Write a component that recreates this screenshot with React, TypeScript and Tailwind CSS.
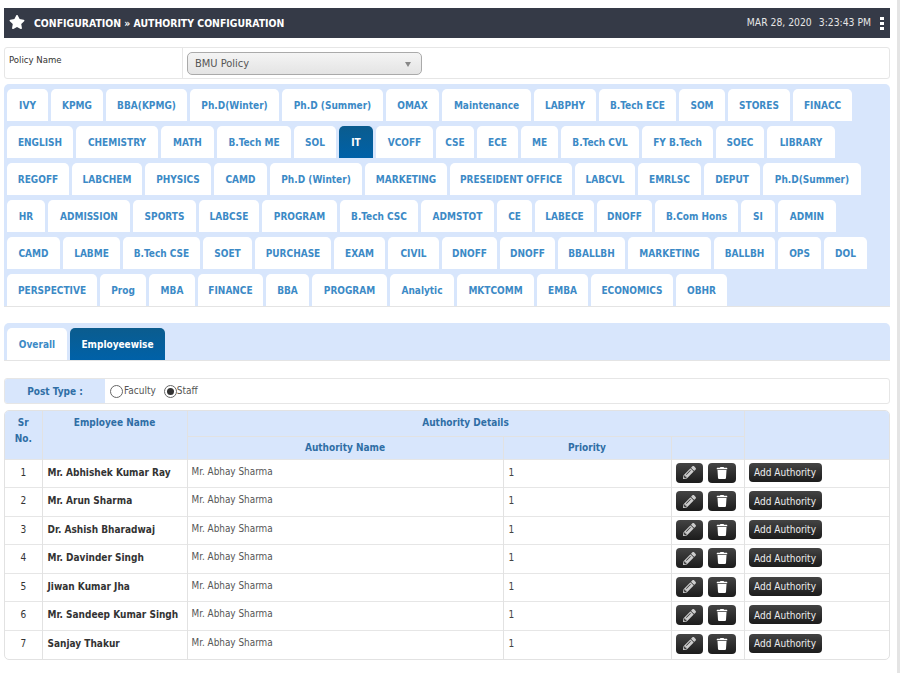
import { FaStar, FaPencilAlt, FaTrash } from "react-icons/fa";

const tabRows: [string, string][][] = [
  [["IVY", "w-[41px]"], ["KPMG", "w-[52px]"], ["BBA(KPMG)", "w-[81px]"], ["Ph.D(Winter)", "w-[89px]"], ["Ph.D (Summer)", "w-[101px]"], ["OMAX", "w-[53px]"], ["Maintenance", "w-[89px]"], ["LABPHY", "w-[62px]"], ["B.Tech ECE", "w-[77px]"], ["SOM", "w-[46px]"], ["STORES", "w-[62px]"], ["FINACC", "w-[59px]"]],
  [["ENGLISH", "w-[66px]"], ["CHEMISTRY", "w-[82px]"], ["MATH", "w-[53px]"], ["B.Tech ME", "w-[74px]"], ["SOL", "w-[42px]"], ["IT", "w-[34px]"], ["VCOFF", "w-[57px]"], ["CSE", "w-[38px]"], ["ECE", "w-[41px]"], ["ME", "w-[37px]"], ["B.Tech CVL", "w-[78px]"], ["FY B.Tech", "w-[71px]"], ["SOEC", "w-[48px]"], ["LIBRARY", "w-[68px]"]],
  [["REGOFF", "w-[62px]"], ["LABCHEM", "w-[70px]"], ["PHYSICS", "w-[66px]"], ["CAMD", "w-[53px]"], ["Ph.D (Winter)", "w-[92px]"], ["MARKETING", "w-[82px]"], ["PRESEIDENT OFFICE", "w-[122px]"], ["LABCVL", "w-[60px]"], ["EMRLSC", "w-[63px]"], ["DEPUT", "w-[56px]"], ["Ph.D(Summer)", "w-[98px]"]],
  [["HR", "w-[38px]"], ["ADMISSION", "w-[82px]"], ["SPORTS", "w-[63px]"], ["LABCSE", "w-[60px]"], ["PROGRAM", "w-[75px]"], ["B.Tech CSC", "w-[78px]"], ["ADMSTOT", "w-[73px]"], ["CE", "w-[35px]"], ["LABECE", "w-[59px]"], ["DNOFF", "w-[55px]"], ["B.Com Hons", "w-[83px]"], ["SI", "w-[34px]"], ["ADMIN", "w-[58px]"]],
  [["CAMD", "w-[53px]"], ["LABME", "w-[57px]"], ["B.Tech CSE", "w-[77px]"], ["SOET", "w-[49px]"], ["PURCHASE", "w-[76px]"], ["EXAM", "w-[51px]"], ["CIVIL", "w-[51px]"], ["DNOFF", "w-[55px]"], ["DNOFF", "w-[55px]"], ["BBALLBH", "w-[67px]"], ["MARKETING", "w-[83px]"], ["BALLBH", "w-[61px]"], ["OPS", "w-[43px]"], ["DOL", "w-[43px]"]],
  [["PERSPECTIVE", "w-[90px]"], ["Prog", "w-[46px]"], ["MBA", "w-[46px]"], ["FINANCE", "w-[65px]"], ["BBA", "w-[43px]"], ["PROGRAM", "w-[75px]"], ["Analytic", "w-[64px]"], ["MKTCOMM", "w-[77px]"], ["EMBA", "w-[51px]"], ["ECONOMICS", "w-[82px]"], ["OBHR", "w-[51px]"]],
];

const employees = [
  "Mr. Abhishek Kumar Ray",
  "Mr. Arun Sharma",
  "Dr. Ashish Bharadwaj",
  "Mr. Davinder Singh",
  "Jiwan Kumar Jha",
  "Mr. Sandeep Kumar Singh",
  "Sanjay Thakur",
];

function Tab({ label, width, active }: { label: string; width: string; active?: boolean }) {
  return (
    <div
      className={`${width} h-[32px] flex items-center justify-center pt-[1px] rounded-t-[5px] text-[10px] font-bold whitespace-nowrap ${
        active ? "bg-gradient-to-b from-[#0b5c8e] to-[#0061a8] text-white" : "bg-white text-[#3c8ac6]"
      }`}
    >
      {label}
    </div>
  );
}

function IconButton({ width, children }: { width: string; children: React.ReactNode }) {
  return (
    <span className={`${width} h-[20px] flex items-center justify-center rounded-[4px] bg-gradient-to-b from-[#444] to-[#1c1c1c] text-white`}>
      {children}
    </span>
  );
}

export default function App() {
  return (
    <div className="relative w-[900px] h-[673px] bg-white overflow-hidden pt-[8px] pl-[4px] pr-[10px] font-['DejaVu_Sans','Noto_Sans',sans-serif] font-stretch-condensed text-[#333]">
      <div className="absolute top-0 right-0 bottom-0 w-[3px] bg-[#e4e4e4]" />

      {/* header */}
      <div className="h-[30px] bg-[#353a47] flex items-center justify-between text-white">
        <div className="flex items-center">
          <FaStar className="ml-[5px] text-[16px] -mt-[2px]" />
          <span className="ml-[9px] pt-[1px] text-[10.4px] font-bold">CONFIGURATION » AUTHORITY CONFIGURATION</span>
        </div>
        <div className="flex items-center text-[10.3px] text-[#e6e6e6]">
          <span>MAR 28, 2020</span>
          <span className="ml-[7px]">3:23:43 PM</span>
          <span className="ml-[9px] mr-[6px] flex flex-col gap-[2px]">
            <i className="block w-[4px] h-[3px] bg-white" />
            <i className="block w-[4px] h-[3px] bg-white" />
            <i className="block w-[4px] h-[3px] bg-white" />
          </span>
        </div>
      </div>

      {/* policy */}
      <div className="mt-[9px] h-[32px] flex border border-[#e6e6e6] rounded-[3px]">
        <div className="w-[178px] border-r border-[#e6e6e6] pl-[4px] pt-[5px] text-[9.5px]">Policy Name</div>
        <div className="pl-[4px] pt-[4px]">
          <div className="w-[235px] h-[23px] flex items-center justify-between pl-[7px] pr-[10px] pt-[1px] rounded-[5px] border border-[#aaa] bg-gradient-to-b from-[#f4f4f4] to-[#e4e4e4] text-[11px] text-[#555]">
            BMU Policy
            <span className="w-0 h-0 border-x-[3px] border-x-transparent border-t-[5px] border-t-[#888]" />
          </div>
        </div>
      </div>

      {/* department tabs */}
      <div className="mt-[5px] h-[223px] bg-[#d8e6fc] rounded-t-[5px] pt-[5px] pl-[3px] flex flex-col gap-[5px] border-b border-[#e4e4e4]">
        {tabRows.map((row, i) => (
          <div key={i} className="flex gap-[3px]">
            {row.map(([label, width], j) => (
              <Tab key={j} label={label} width={width} active={label === "IT"} />
            ))}
          </div>
        ))}
      </div>

      {/* overall / employeewise */}
      <div className="mt-[16px] h-[38px] bg-[#d8e6fc] rounded-t-[5px] pt-[5px] pl-[3px] flex gap-[3px] border-b border-[#e4e4e4]">
        <Tab label="Overall" width="w-[60px]" />
        <Tab label="Employeewise" width="w-[95px]" active />
      </div>

      {/* post type */}
      <div className="mt-[17px] h-[26px] flex border border-[#e6e6e6] rounded-[3px] text-[10px] overflow-hidden">
        <div className="w-[100px] bg-[#d8e6fc] flex items-center justify-center font-bold text-[#2f6ea5]">Post Type :</div>
        <div className="flex items-center pl-[5px] text-[#555]">
          <span className="w-[13px] h-[13px] rounded-full border border-[#666] bg-white" />
          <span className="ml-[1px] -mt-[2px]">Faculty</span>
          <span className="ml-[8px] w-[13px] h-[13px] rounded-full border border-[#666] bg-white flex items-center justify-center">
            <i className="block w-[7px] h-[7px] rounded-full bg-[#333]" />
          </span>
          <span className="-mt-[2px]">Staff</span>
        </div>
      </div>

      {/* table */}
      <div className="mt-[6px] border border-[#e2e2e2] rounded-[5px] overflow-hidden">
        <table className="w-[884px] table-fixed border-collapse text-[10px]">
          <colgroup>
            <col className="w-[37px]" />
            <col className="w-[145px]" />
            <col className="w-[316px]" />
            <col className="w-[168px]" />
            <col className="w-[73px]" />
            <col className="w-[145px]" />
          </colgroup>
          <thead className="bg-[#d8e6fc] text-[#2f6ea5] font-bold text-[10px]">
            <tr className="h-[25px]">
              <th rowSpan={2} className="align-top pt-[4px] leading-[16px] border-r border-[#e2e2e2] font-bold">Sr<br />No.</th>
              <th rowSpan={2} className="align-top pt-[4px] leading-[16px] border-r border-[#e2e2e2] font-bold">Employee Name</th>
              <th colSpan={3} className="pb-[1px] border-r border-b border-[#e2e2e2] font-bold">Authority Details</th>
              <th rowSpan={2} />
            </tr>
            <tr className="h-[23px]">
              <th className="border-r border-[#e2e2e2] font-bold">Authority Name</th>
              <th className="border-r border-[#e2e2e2] font-bold">Priority</th>
              <th className="border-r border-[#e2e2e2]" />
            </tr>
          </thead>
          <tbody>
            {employees.map((name, i) => (
              <tr key={name} className="h-[28.5px] border-t border-[#e6e6e6]">
                <td className="align-top pt-[5px] text-center border-r border-[#e2e2e2]">{i + 1}</td>
                <td className="align-top pt-[5px] pl-[5px] font-bold border-r border-[#e2e2e2] whitespace-nowrap">{name}</td>
                <td className="align-top pt-[5px] pl-[4px] text-[9.9px] border-r border-[#e2e2e2] text-[#555]">Mr. Abhay Sharma</td>
                <td className="align-top pt-[5px] pl-[5px] border-r border-[#e2e2e2] text-[#444]">1</td>
                <td className="align-top pt-[3px] border-r border-[#e2e2e2]">
                  <div className="flex gap-[5px] pl-[4px]">
                    <IconButton width="w-[27px]"><FaPencilAlt className="text-[13px] text-[#ccc]" /></IconButton>
                    <IconButton width="w-[28px]"><FaTrash className="text-[12px]" /></IconButton>
                  </div>
                </td>
                <td className="align-top pt-[3px] pl-[4px]">
                  <span className="flex items-center justify-center pt-[1px] w-[73px] h-[19px] rounded-[4px] bg-gradient-to-b from-[#444] to-[#1c1c1c] text-[10px] text-[#eee]">Add Authority</span>
                </td>
              </tr>
            ))}
          </tbody>
        </table>
      </div>
    </div>
  );
}
